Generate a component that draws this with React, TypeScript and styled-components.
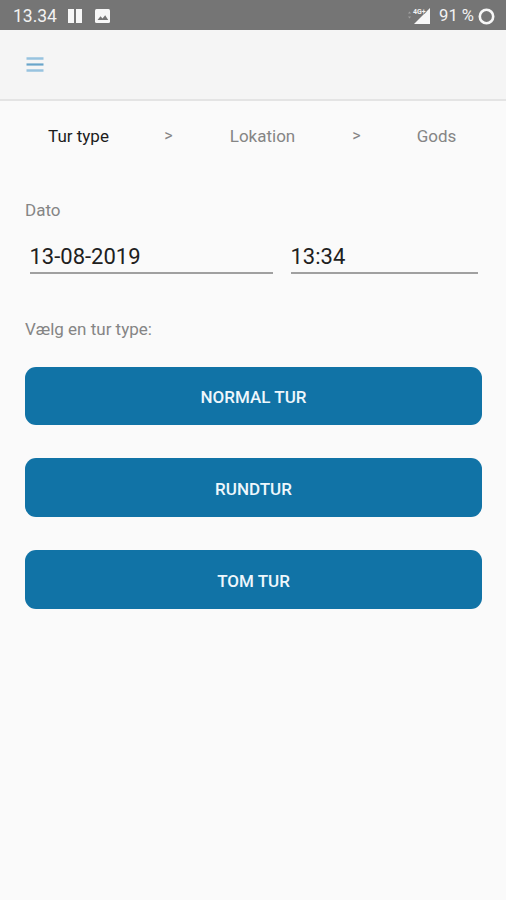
import React from "react";
import styled, { createGlobalStyle } from "styled-components";

const GlobalStyle = createGlobalStyle`
  * { box-sizing: border-box; }
  body { margin: 0; background: #fafafa; font-family: Roboto, sans-serif; }
`;

const Screen = styled.div`
  width: 506px;
  height: 900px;
  background: #fafafa;
  overflow: hidden;
`;

const StatusBar = styled.div`
  height: 30px;
  padding: 2px 11px 0 13px;
  display: flex;
  align-items: center;
  justify-content: space-between;
  background: #757575;
  color: #f2f2f2;
  font-size: 17px;
  line-height: 28px;
`;

const StatusGroup = styled.div`
  display: flex;
  align-items: center;
  white-space: nowrap;
`;

const Clock = styled.span`
  width: 44px;
  font-size: 17.5px;
`;

const PauseIcon = styled.svg`
  margin-left: 11px;
`;

const PictureIcon = styled.svg`
  margin-left: 13px;
`;

const Battery = styled.span`
  margin: 0 4px 0 8px;
  font-size: 16.6px;
`;

const AppBar = styled.header`
  height: 71px;
  padding: 27px 26px 0;
  background: #f5f5f5;
  border-bottom: 2px solid #e4e4e4;
`;

const MenuButton = styled.button`
  display: block;
  border: 0;
  padding: 0;
  background: none;
`;

const Content = styled.main`
  padding: 23px 24px 0 25px;
`;

const Steps = styled.nav`
  display: grid;
  grid-template-columns: 107px 73px 115px 73px 87px;
  height: 24px;
  line-height: 24px;
  font-size: 17px;
  text-align: center;
`;

const Step = styled.span<{ $active?: boolean }>`
  color: ${(p) => (p.$active ? "#1c1c1c" : "#858585")};
`;

const Separator = styled.span`
  color: #858585;
  font-size: 16px;
`;

const Label = styled.div<{ $top: number }>`
  margin-top: ${(p) => p.$top}px;
  height: 24px;
  line-height: 24px;
  font-size: 17px;
  color: #858585;
`;

const Fields = styled.div`
  display: grid;
  grid-template-columns: 243px 187px;
  column-gap: 18px;
  margin: 19px 0 0 4.5px;
`;

const Field = styled.div`
  height: 33px;
  border-bottom: 2px solid #a0a0a0;
  color: #202020;
  font-size: 22px;
  line-height: 31px;
`;

const Actions = styled.div`
  display: grid;
  row-gap: 33.3px;
  margin-top: 25.5px;
`;

const ActionButton = styled.button`
  height: 58.7px;
  border: 0;
  border-radius: 11px;
  padding: 2px 0 0;
  background: #1173a6;
  color: #eef7fc;
  font: 500 17px Roboto, sans-serif;
  text-transform: uppercase;
`;

const actions = ["Normal tur", "Rundtur", "Tom tur"];

export default function App() {
  return (
    <Screen>
      <GlobalStyle />
      <StatusBar>
        <StatusGroup>
          <Clock>13.34</Clock>
          <PauseIcon width="14" height="14" viewBox="0 0 14 14">
            <path d="M0 0h6v14H0zM8 0h6v14H8z" fill="#f7f7f7" />
          </PauseIcon>
          <PictureIcon width="15" height="14" viewBox="0 0 15 14">
            <rect width="15" height="14" rx="1.5" fill="#f7f7f7" />
            <path d="M2.5 11l3-3.8 2 2.3L10.200 6.200l3 4.800z" fill="#757575" />
          </PictureIcon>
        </StatusGroup>
        <StatusGroup>
          <svg width="26" height="18" viewBox="0 0 26 18">
            <path d="M25 1v16H9z" fill="#f7f7f7" />
            <path d="M3 6.500l1.500-2 1.500 2zM3 9.500l1.500 2 1.500-2z" fill="#a0a0a0" />
            <text x="8" y="6.500" fontSize="7" fontWeight="700" fill="#f2f2f2" stroke="#757575" strokeWidth="1.200" paintOrder="stroke" fontFamily="Roboto, sans-serif">4G+</text>
          </svg>
          <Battery>91 %</Battery>
          <svg width="17" height="17" viewBox="0 0 17 17">
            <circle cx="8.500" cy="8.500" r="6.700" fill="none" stroke="#f7f7f7" strokeWidth="2.600" />
          </svg>
        </StatusGroup>
      </StatusBar>
      <AppBar>
        <MenuButton aria-label="Menu">
          <svg width="18" height="16" viewBox="0 0 18 16" display="block">
            <path d="M0.500 1.500h17M0.500 13.500h17" stroke="#98c3df" strokeWidth="2.400" />
            <path d="M0.500 7.500h17" stroke="#69a5ca" strokeWidth="2.200" />
          </svg>
        </MenuButton>
      </AppBar>
      <Content>
        <Steps>
          <Step $active>Tur type</Step>
          <Separator>&gt;</Separator>
          <Step>Lokation</Step>
          <Separator>&gt;</Separator>
          <Step>Gods</Step>
        </Steps>
        <Label $top={50}>Dato</Label>
        <Fields>
          <Field>13-08-2019</Field>
          <Field>13:34</Field>
        </Fields>
        <Label $top={43}>Vælg en tur type:</Label>
        <Actions>
          {actions.map((name) => (
            <ActionButton key={name}>{name}</ActionButton>
          ))}
        </Actions>
      </Content>
    </Screen>
  );
}
